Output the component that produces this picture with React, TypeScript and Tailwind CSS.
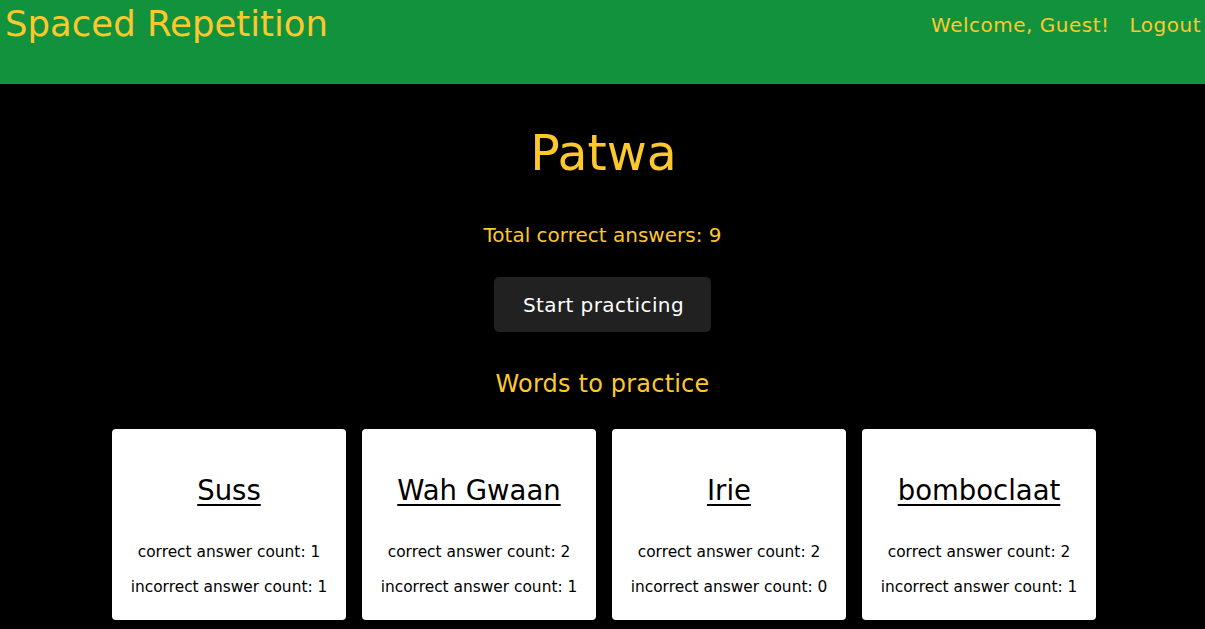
import React from "react";

const words = [
  { word: "Suss", correct: 1, incorrect: 1 },
  { word: "Wah Gwaan", correct: 2, incorrect: 1 },
  { word: "Irie", correct: 2, incorrect: 0 },
  { word: "bomboclaat", correct: 2, incorrect: 1 },
];

export default function App() {
  return (
    <div className="min-h-[629px] bg-black font-['DejaVu_Sans',sans-serif]">
      <header className="h-[84px] bg-[#12923c] flex justify-between items-start">
        <h1 className="pl-[5px] mt-[3px] text-[35.5px] leading-[42px] text-[#fcc82e] font-normal">
          Spaced Repetition
        </h1>
        <nav className="flex gap-[20px] pr-[4px] mt-[13px] text-[20px] leading-[24px] tracking-[0.5px] text-[#fcc82e]">
          <span>Welcome, Guest!</span>
          <a href="#">Logout</a>
        </nav>
      </header>
      <main className="flex flex-col items-center">
        <h2 className="mt-[42px] text-[49px] leading-[56px] text-[#fcc82e] font-normal pl-[2px]">
          Patwa
        </h2>
        <p className="mt-[41px] text-[20px] leading-[24px] text-[#fcc82e]">
          Total correct answers: 9
        </p>
        <button className="mt-[30px] w-[217px] h-[55px] rounded-[5px] bg-[#212121] text-white text-[20px] leading-[24px] tracking-[0.4px] pl-[2px]">
          Start practicing
        </button>
        <h3 className="mt-[38px] text-[24px] leading-[28px] text-[#fcc82e] font-normal tracking-[0.2px]">
          Words to practice
        </h3>
        <ul className="mt-[31px] flex gap-4 pl-[3px]">
          {words.map((w) => (
            <li
              key={w.word}
              className="w-[234px] h-[191px] bg-white rounded-[4px] flex flex-col items-center pt-[44px] text-black"
            >
              <a href="#" className="text-[27.5px] leading-[34px] underline underline-offset-[4px] decoration-[1.5px]">
                {w.word}
              </a>
              <div className="mt-[28px] flex flex-col items-center text-[15.4px] leading-[35px]">
                <span>correct answer count: {w.correct}</span>
                <span>incorrect answer count: {w.incorrect}</span>
              </div>
            </li>
          ))}
        </ul>
      </main>
    </div>
  );
}
